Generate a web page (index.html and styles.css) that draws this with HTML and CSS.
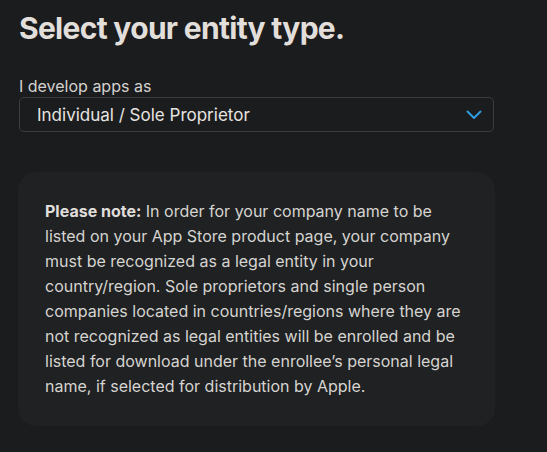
FILE: index.html
```html
<!DOCTYPE html>
<html lang="en">
<head>
<meta charset="utf-8">
<title>Select your entity type</title>
<link rel="stylesheet" href="styles.css">
</head>
<body>
<main class="page">
  <h1 class="title">Select your entity type.</h1>
  <div class="field">
    <label class="label" for="entity">I develop apps as</label>
    <div class="select" id="entity">
      <span class="select-value">Individual / Sole Proprietor</span>
      <svg class="chevron" width="16" height="10" viewBox="0 0 16 10" aria-hidden="true">
        <path d="M1.5 1.5 L8 8 L14.5 1.5" fill="none" stroke="#2f9de0" stroke-width="2" stroke-linecap="round" stroke-linejoin="round"/>
      </svg>
    </div>
  </div>
  <section class="note">
    <p><strong>Please note:</strong> In order for your company name to be listed on your App Store product page, your company must be recognized as a legal entity in your country/region. Sole proprietors and single person companies located in countries/regions where they are not recognized as legal entities will be enrolled and be listed for download under the enrollee’s personal legal name, if selected for distribution by Apple.</p>
  </section>
</main>
</body>
</html>
```
FILE: styles.css
```css
html, body {
  margin: 0;
  padding: 0;
  background: #1b1c1e;
}
body {
  font-family: Inter, "Noto Sans", sans-serif;
  color: #dcdad6;
}
.page {
  padding: 8px 53px 0 19px;
  display: flex;
  flex-direction: column;
}
.title {
  margin: 0;
  font-size: 30px;
  font-weight: 700;
  line-height: 40px;
  color: #e2dfdb;
  letter-spacing: -0.7px;
}
.field {
  margin-top: 28px;
  display: flex;
  flex-direction: column;
}
.label {
  font-size: 16px;
  line-height: 20px;
  color: #d4d2ce;
}
.select {
  margin-top: 1px;
  height: 35px;
  box-sizing: border-box;
  border: 1px solid #3b3d40;
  border-radius: 5px;
  display: flex;
  align-items: center;
  justify-content: space-between;
  padding: 0 11px 0 17px;
}
.select-value {
  font-size: 17px;
  font-weight: 400;
  color: #e6e4e0;
}
.chevron {
  display: block;
}
.note {
  margin-top: 40px;
  margin-left: -1px;
  margin-right: -1px;
  background: #1f2123;
  border-radius: 18px;
  padding: 27px 27px 27px 27px;
}
.note p {
  margin: 0;
  font-size: 16px;
  line-height: 25px;
  color: #d6d4d0;
}
.note strong {
  font-weight: 700;
  color: #e0deda;
}
```
